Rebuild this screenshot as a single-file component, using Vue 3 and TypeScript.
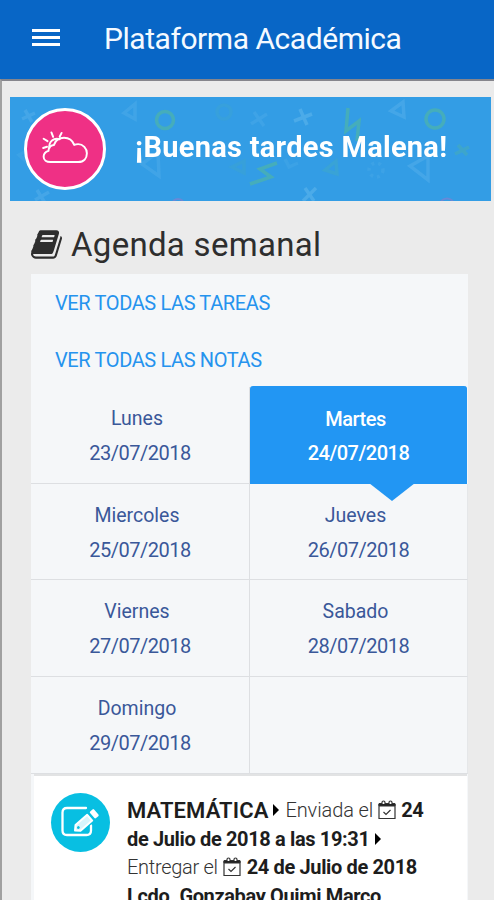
<script setup lang="ts">
interface Day {
  name: string
  date: string
  active?: boolean
}

const days: Day[] = [
  { name: 'Lunes', date: '23/07/2018' },
  { name: 'Martes', date: '24/07/2018', active: true },
  { name: 'Miercoles', date: '25/07/2018' },
  { name: 'Jueves', date: '26/07/2018' },
  { name: 'Viernes', date: '27/07/2018' },
  { name: 'Sabado', date: '28/07/2018' },
  { name: 'Domingo', date: '29/07/2018' },
]
</script>

<template>
  <div class="screen">
    <header class="bar">
      <button class="menu" aria-label="Menú"><span /><span /><span /></button>
      <h1 class="title">Plataforma Académica</h1>
    </header>

    <main class="content">
      <section class="banner">
        <svg class="pattern" viewBox="0 0 481 104" fill="none">
          <g stroke="#65b8ec" stroke-width="3.500" opacity=".5">
            <path d="M15 13l7 12M12 22l13-6M27 93l8 13M25 103l14-8" opacity=".7" />
            <path d="M244 15l10 14M241 27l16-10" opacity=".45" />
            <path d="M290 12l7 16M284 24l18-7M295 91l9 13M293 104l13-13" />
            <path d="M114 16l11-9v15zM132 67l16-12 1 24z" opacity=".55" />
            <path d="M381 14l12-9 1 15zM400 69l18-10v24z" opacity=".7" />
            <path d="M9 58l9-5v13zM275 62l4 8 9-4" opacity=".35" />
            <circle cx="366" cy="73" r="7" stroke-dasharray="3 4" opacity=".4" />
          </g>
          <g stroke="#58bd91" stroke-width="3.500" opacity=".5">
            <circle cx="155" cy="23" r="8.500" />
            <circle cx="425" cy="22" r="9" />
            <path d="M338 11l-2 23 13-10-2 20M267 66l-17 6 11 8-21 7" />
            <path d="M448 48l9 10M445 57l14-7" opacity=".6" />
            <path d="M315 73l11-9 1 13z" opacity=".35" />
            <circle cx="214" cy="15" r="7" opacity=".2" />
            <path d="M222 70l12-6v12z" opacity=".25" />
          </g>
          <path d="M163 104q5-4 10 0M431 104q6-5 12 0" stroke="#8b7cce" stroke-width="2" opacity=".6" />
        </svg>
        <div class="weather">
          <svg viewBox="0 0 50 36" fill="none" stroke="#fff" stroke-width="2" stroke-linecap="round" stroke-linejoin="round">
            <path d="M9.500 33h28.500c6 0 9-4 9-9s-4-9.500-9-9.500q-2 0-4 .8c-2-5-5.500-7.300-10.500-7.300-5.500 0-9 3-10.500 7.500-4 .5-5.500 3-5.500 6-3 1-5 3-5 6 0 3.500 3 5.500 7 5.500z" />
            <path d="M8.500 18.500c-1-6.500 4.500-11 10.500-9M2 18.500l4-1.300M2.500 9l4 2.500M10.500 2.500l1.800 4.500M21 3l-2 4" />
          </svg>
        </div>
        <p class="greeting">¡Buenas tardes Malena!</p>
      </section>

      <h2 class="heading">
        <svg class="book" viewBox="0 128 1664 1536" fill="currentColor">
          <path d="M1639 478q40 57 18 129l-275 906q-19 64-76.500 107.500t-122.500 43.500h-923q-77 0-148.500-53.500t-99.500-131.500q-24-67-2-127 0-4 3-27t4-37q1-8-3-21.500t-3-19.500q2-11 8-21t16.500-23.500 16.500-23.500q23-38 45-91.500t30-91.500q3-10 .5-30t-.5-28q3-11 17-28t17-23q21-36 42-92t25-90q1-9-2.500-32t.5-28q4-13 22-30.500t22-22.500q19-26 42.500-84.500t27.500-96.500q1-8-3-25.500t-2-26.500q2-8 9-18t18-23 17-21q8-12 16.500-30.500t15-35 16-36 19.500-32 26.500-23.500 36-11.500 47.500 5.500l-1 3q38-9 51-9h761q74 0 114 56t18 130l-274 906q-36 119-71.500 153.500t-128.500 34.500h-869q-27 0-38 15-11 16-1 43 24 70 144 70h923q29 0 56-15.500t35-41.500l300-987q7-22 5-57 38 15 59 43zm-1064 2q-4 13 2 22.500t20 9.500h608q13 0 25.500-9.500t16.500-22.500l21-64q4-13-2-22.500t-20-9.500h-608q-13 0-25.500 9.500t-16.500 22.500zm-83 256q-4 13 2 22.500t20 9.500h608q13 0 25.500-9.500t16.500-22.500l21-64q4-13-2-22.500t-20-9.500h-608q-13 0-25.500 9.500t-16.500 22.500z" />
        </svg>
        <span>Agenda semanal</span>
      </h2>

      <section class="agenda">
        <nav class="links">
          <a>VER TODAS LAS TAREAS</a>
          <a>VER TODAS LAS NOTAS</a>
        </nav>
        <div class="days">
          <div v-for="day in days" :key="day.date" class="day" :class="{ active: day.active }">
            <span class="name">{{ day.name }}</span>
            <span class="date">{{ day.date }}</span>
          </div>
          <div class="day" />
        </div>

        <article class="task">
          <div class="badge">
            <svg viewBox="0 0 40 32" fill="none" stroke="#fff" stroke-width="2.300" stroke-linecap="round">
              <path d="M25 2H6Q1.500 2 1.500 6.500v18q0 4.500 4.500 4.500h19.500q4.500 0 4.500-4.500v-5" />
              <path d="M13.500 24.500l1.500-7L31 3l6.500 6.500L20.500 24z" fill="#08bfe2" stroke="#08bfe2" stroke-width="4" />
              <g transform="translate(14 24.500) rotate(-41)">
                <path d="M0 0l4-3.800h15.500v7.600H4z" fill="#d9f5fc" stroke-width="2" stroke-linejoin="round" />
                <path d="M24-3.300h3v6.600h-3z" fill="#fff" stroke-linejoin="round" />
                <circle cx="4.500" cy="0" r="1.400" fill="#08bfe2" stroke="none" />
              </g>
            </svg>
          </div>
          <div class="text">
            <div class="line l1">
              <b class="subject">MATEMÁTICA</b>
              <svg class="caret" viewBox="0 0 6 12"><path d="M0 0l6 6-6 6z" /></svg>
              <span class="thin">Enviada el</span>
              <svg class="cal" viewBox="0 0 18 20" fill="none" stroke="#333">
                <path d="M1 4.500h16v14H1z" stroke-width="1.200" />
                <path d="M1 3.500h16v2.500H1z" fill="#222" />
                <path d="M4 4V2.500Q4 1 5.500 1T7 2.500V4M11 4V2.500Q11 1 12.500 1T14 2.500V4" fill="#fff" stroke-width="1.200" />
                <path d="M5.500 12l2.500 2.500 4.500-4.500" stroke-width="1.200" />
              </svg>
              <b>24</b>
            </div>
            <div class="line l2">
              <b>de Julio de 2018 a las 19:31</b>
              <svg class="caret" viewBox="0 0 6 12"><path d="M0 0l6 6-6 6z" /></svg>
            </div>
            <div class="line l3">
              <span class="thin">Entregar el</span>
              <svg class="cal" viewBox="0 0 18 20" fill="none" stroke="#333">
                <path d="M1 4.500h16v14H1z" stroke-width="1.200" />
                <path d="M1 3.500h16v2.500H1z" fill="#222" />
                <path d="M4 4V2.500Q4 1 5.500 1T7 2.500V4M11 4V2.500Q11 1 12.500 1T14 2.500V4" fill="#fff" stroke-width="1.200" />
                <path d="M5.500 12l2.500 2.500 4.500-4.500" stroke-width="1.200" />
              </svg>
              <b>24 de Julio de 2018</b>
            </div>
            <div class="line l4"><b>Lcdo. Gonzabay Quimi Marco</b></div>
          </div>
        </article>
      </section>
    </main>
  </div>
</template>

<style>
body {
  background: #ebebeb;
  overflow: hidden;
}
</style>

<style scoped>
* {
  box-sizing: border-box;
}
.screen {
  height: 900px;
  overflow: hidden;
  background: #ebebeb;
  font-family: Roboto, sans-serif;
}
.bar {
  height: 79px;
  display: flex;
  align-items: flex-start;
  background: #0866c6;
}
.menu {
  width: 28px;
  margin: 28.500px 0 0 32px;
  padding: 0;
  border: 0;
  background: none;
  display: flex;
  flex-direction: column;
  gap: 4px;
}
.menu span {
  height: 3.300px;
  background: #fff;
}
.title {
  margin: 20px 0 0 44px;
  font-size: 30px;
  line-height: 37px;
  font-weight: 400;
  letter-spacing: -0.450px;
  color: #f5faff;
  white-space: nowrap;
}
.content {
  height: 821px;
  border-top: 2.500px solid #85858c;
  border-left: 2px solid #a0a0a0;
  padding: 16px 3px 0 8px;
}
.banner {
  position: relative;
  height: 104px;
  display: flex;
  align-items: center;
  background: #339de5;
  overflow: hidden;
}
.pattern {
  position: absolute;
  inset: 0;
  width: 481px;
  height: 104px;
}
.weather {
  position: relative;
  width: 82px;
  height: 82px;
  margin: -1px 0 0 14px;
  border: 3px solid #fff;
  border-radius: 50%;
  background: #ef3085;
  display: flex;
  align-items: center;
  justify-content: center;
}
.weather svg {
  width: 49px;
  height: 35px;
  margin-top: -3px;
}
.greeting {
  position: relative;
  margin: -5px 0 0 29px;
  font-size: 29px;
  letter-spacing: 0.280px;
  line-height: 34px;
  font-weight: 700;
  color: #fff;
  white-space: nowrap;
}
.heading {
  margin: 23px 0 0 21px;
  height: 40px;
  display: flex;
  align-items: center;
  gap: 9px;
  font-size: 33px;
  letter-spacing: 0.290px;
  font-weight: 400;
  color: #2e2e2e;
  white-space: nowrap;
}
.heading span {
  margin-top: 1px;
}
.book {
  width: 31px;
  height: 29px;
}
.agenda {
  width: 437px;
  margin: 10px 0 0 21px;
  background: #f5f7f9;
}
.links {
  height: 113px;
  padding: 1px 0 0 24px;
  display: flex;
  flex-direction: column;
  font-size: 20px;
  letter-spacing: -0.380px;
  color: #2593ee;
}
.links a {
  height: 56.500px;
  line-height: 57px;
}
.days {
  display: grid;
  grid-template-columns: 219px 218px;
  grid-auto-rows: 96.700px;
}
.day {
  position: relative;
  border-right: 1px solid #dddfe2;
  border-bottom: 1.500px solid #dddfe2;
  padding: 15px 6px 0 0;
  display: flex;
  flex-direction: column;
  align-items: center;
  font-size: 19.500px;
  line-height: 34px;
  color: #3a5899;
}
.day:nth-child(even) {
  border-right-color: #e5e7e9;
}
.date {
  padding-left: 6px;
  font-size: 20px;
  letter-spacing: -0.480px;
}
.day.active {
  background: #2296f3;
  color: #fff;
  font-weight: 500;
  border-color: #2296f3;
  border-radius: 3px 3px 0 0;
  margin-right: 1px;
  margin-top: -1px;
  padding-top: 16px;
  padding-right: 5px;
}
.active .name {
  font-size: 20px;
  letter-spacing: -0.500px;
}
.active::after {
  content: '';
  position: absolute;
  left: 119px;
  top: 97px;
  border: 23px solid transparent;
  border-top: 18px solid #2296f3;
  border-bottom: 0;
}
.task {
  height: 140px;
  margin: 0 1px 0 3px;
  padding: 17px 0 0 17px;
  background: #fff;
  display: flex;
  border-top: 2.500px solid #e2e3e4;
}
.badge {
  width: 59px;
  height: 59px;
  flex: none;
  border-radius: 50%;
  background: #08bfe2;
  display: flex;
  align-items: center;
  justify-content: center;
}
.badge svg {
  width: 40px;
  height: 32px;
}
.text {
  padding: 3px 0 0 17px;
  font-size: 20px;
  letter-spacing: -0.360px;
  color: #1d1d1d;
}
.line {
  height: 28.500px;
  display: flex;
  align-items: center;
  white-space: nowrap;
  gap: 5px;
}
.line b {
  font-weight: 700;
}
.line .subject {
  font-size: 22px;
  font-weight: 600;
  letter-spacing: 0.100px;
}
.line .thin {
  font-size: 20px;
  letter-spacing: -0.100px;
  font-weight: 300;
  color: #333;
}
.caret {
  width: 6px;
  height: 12px;
}
.l1 .caret {
  margin-right: 1px;
}
.cal {
  width: 18px;
  height: 20px;
}
.l3 .cal {
  margin-right: 1px;
}
.l3 .thin {
  letter-spacing: -0.300px;
}
</style>
